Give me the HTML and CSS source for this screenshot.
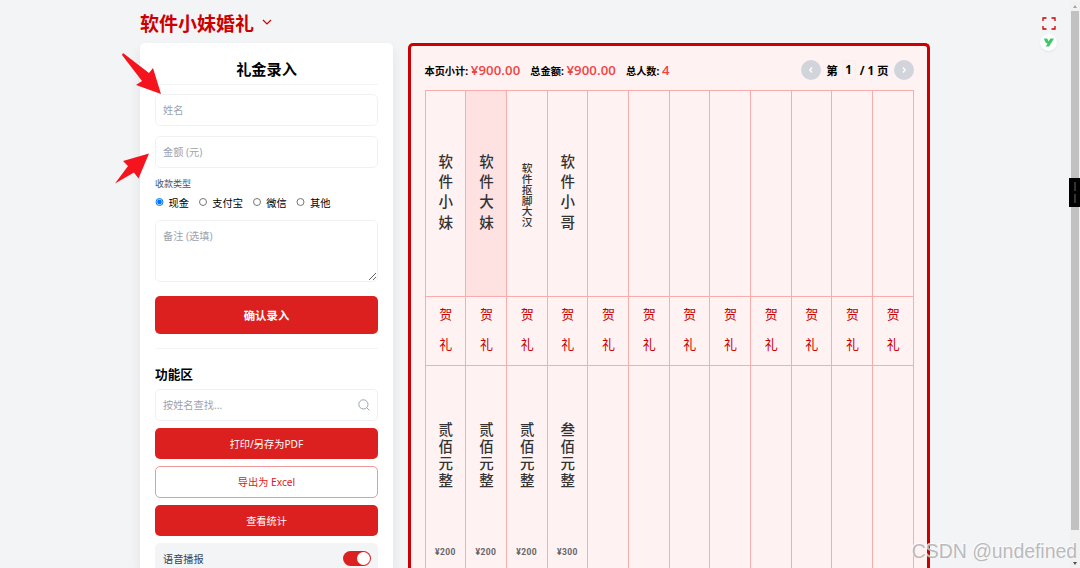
FILE: index.html
```html
<!DOCTYPE html>
<html lang="zh-CN">
<head>
  <meta charset="UTF-8" />
  <meta name="viewport" content="width=device-width, initial-scale=1.0"/>
  <title>软件小妹婚礼</title>
  <link rel="stylesheet" href="styles.css">
</head>
<body>
  <div class="page">
    <header class="page-header">
      <h1>软件小妹婚礼</h1>
      <svg class="chevron" viewBox="0 0 10 6"><path d="M1 1l4 4 4-4"/></svg>
    </header>

    <main class="columns">
      <section class="panel">
        <h2>礼金录入</h2>
        <form id="giftForm">
          <input class="field" type="text" placeholder="姓名">
          <input class="field" type="text" placeholder="金额 (元)">
          <div class="pay-label">收款类型</div>
          <div class="pay-types">
            <label><input type="radio" name="type" checked>现金</label>
            <label><input type="radio" name="type">支付宝</label>
            <label><input type="radio" name="type">微信</label>
            <label><input type="radio" name="type">其他</label>
          </div>
          <textarea class="field note" placeholder="备注 (选填)"></textarea>
          <button class="btn submit" type="submit">确认录入</button>
        </form>
        <div class="tools">
          <h3>功能区</h3>
          <div class="field search">
            <input type="text" placeholder="按姓名查找...">
            <svg viewBox="0 0 12 12"><circle cx="5.4" cy="5.4" r="4.6"/><path d="M8.7 8.7l2.6 2.6"/></svg>
          </div>
          <button class="btn">打印/另存为PDF</button>
          <button class="btn outline">导出为 Excel</button>
          <button class="btn">查看统计</button>
          <div class="voice"><span>语音播报</span><span class="switch"></span></div>
        </div>
      </section>

      <section class="book">
        <div class="book-header">
          <div class="totals">
            <span>本页小计: <b>¥900.00</b></span>
            <span>总金额: <b>¥900.00</b></span>
            <span>总人数: <b>4</b></span>
          </div>
          <div class="pager">
            <button class="round"><svg viewBox="0 0 6 8"><path d="M4 1.5L1.8 4 4 6.5"/></svg></button>
            <span>第</span><span class="page-no">1</span><span>/ 1 页</span>
            <button class="round"><svg viewBox="0 0 6 8"><path d="M2 1.5L4.2 4 2 6.5"/></svg></button>
          </div>
        </div>
        <div class="grid" id="grid"></div>
      </section>
    </main>
  </div>

  <div class="side-tools">
    <svg class="fullscreen" viewBox="0 0 14 13"><path d="M1 4V1h3.5M9.5 1H13v3M13 9v3H9.5M4.5 12H1V9"/></svg>
    <div class="plugin"><svg viewBox="0 0 10 9"><path d="M0 .5h3.2l1.3 2.8L6.5.5H10L5 8.5H1.8l1.8-2.8C1.6 5.4.6 3 0 .5z"/></svg></div>
  </div>

  <div class="scrollbar">
    <i class="arrow-up"></i>
    <div class="thumb"></div>
    <i class="arrow-down"></i>
  </div>
  <div class="handle"><i></i><i></i></div>

  <svg class="pointer pointer-name" viewBox="0 0 40 42"><path d="M1 0L27 20L31 15L39 41L14 32L20 28L0 2z"/></svg>
  <svg class="pointer pointer-amount" viewBox="0 0 34 31"><path d="M34 .5L23.5 25.5L19 19.5L0 30.5L13 13L8 8z"/></svg>
  <div class="watermark">CSDN @undefined</div>

  <script src="script.js"></script>
</body>
</html>
```

FILE: styles.css
```css
* {
  box-sizing: border-box;
}
body {
  margin: 0;
  height: 568px;
  overflow: hidden;
  position: relative;
  background: #f3f4f6;
  color: #000;
  font-family: "Noto Sans", "Noto Sans CJK SC", sans-serif;
  font-size: 10.2px;
}
h1, h2, h3 {
  margin: 0;
}
button, input, textarea {
  font-family: inherit;
  font-size: 10.2px;
}
/* side padding leaves room for the panel shadow */
.page {
  width: 822px;
  height: 568px;
  padding: 0 16px;
  margin-left: 124px;
  overflow: hidden;
}
.page-header {
  display: flex;
  align-items: center;
  gap: 8px;
  height: 43px;
  padding-top: 4px;
}
.page-header h1 {
  font-size: 19px;
  line-height: 28px;
  color: #c00;
}
.chevron {
  width: 10px;
  height: 6px;
  margin-top: -4px;
  fill: none;
  stroke: #c00;
  stroke-width: 1.2;
}
.columns {
  display: flex;
  gap: 15px;
  height: 525px;
}
.panel {
  width: 253px;
  padding: 15px 15px 0;
  overflow: hidden;
  background: #fff;
  border-radius: 5px 5px 0 0;
  box-shadow: 0 6px 12px rgba(0, 0, 0, 0.08);
}
.panel h2 {
  height: 27px;
  margin-bottom: 9px;
  border-bottom: 1px solid #f3f4f6;
  font-size: 15.2px;
  line-height: 23px;
  text-align: center;
}
.field {
  display: block;
  width: 100%;
  height: 32px;
  padding: 0 7px;
  margin-bottom: 9.5px;
  background: #fff;
  border: 1px solid #f0f1f3;
  border-radius: 5px;
  outline: none;
}
::placeholder {
  color: #9ca3af;
  opacity: 1;
}
.pay-label {
  height: 15px;
  margin-top: -1px;
  font-size: 9px;
  line-height: 15px;
  color: #4b5563;
}
.pay-types {
  display: flex;
  gap: 9.9px;
  height: 16px;
  margin: 3px 0 10px;
}
.pay-types label {
  display: flex;
  align-items: center;
  gap: 5px;
}
.pay-types input {
  width: 8.5px;
  height: 8.5px;
  margin: 0;
}
.note {
  height: 62px;
  padding-top: 7px;
  margin-bottom: 13.5px;
}
.btn {
  display: block;
  width: 100%;
  height: 30.5px;
  padding: 0;
  margin-bottom: 7.5px;
  color: #fff;
  background: #dc2020;
  border: none;
  border-radius: 5px;
}
.submit {
  height: 38px;
  margin-bottom: 14.5px;
  font-size: 11.4px;
  font-weight: bold;
}
.outline {
  height: 31.5px;
  color: #dc2020;
  background: #fff;
  border: 1px solid #e99;
}
.tools {
  border-top: 1px solid #f3f4f6;
}
.tools h3 {
  padding-top: 15.5px;
  margin-bottom: 6.5px;
  font-size: 12.7px;
  line-height: 18px;
}
.search {
  display: flex;
  align-items: center;
  margin-bottom: 7px;
}
.search input {
  flex: 1;
  padding: 0;
  border: none;
  outline: none;
}
.search svg {
  width: 12px;
  height: 12px;
  fill: none;
  stroke: #9ca3af;
}
.voice {
  display: flex;
  align-items: center;
  justify-content: space-between;
  height: 31px;
  padding: 0 7px 0 8px;
  color: #374151;
  background: #f3f4f6;
  border-radius: 5px;
}
.switch {
  width: 28px;
  height: 15px;
  padding: 1px;
  background: #dc2020;
  border-radius: 8px;
}
.switch::after {
  content: "";
  display: block;
  width: 13px;
  height: 13px;
  margin-left: 13px;
  background: #fff;
  border-radius: 50%;
}
.book {
  width: 522px;
  padding: 13px 13.5px 0;
  overflow: hidden;
  background: #fef2f2;
  border: 3px solid #c00;
  border-bottom: none;
  border-radius: 5px 5px 0 0;
}
.book-header {
  display: flex;
  align-items: center;
  justify-content: space-between;
  height: 22px;
  margin-bottom: 9px;
}
.totals {
  display: flex;
  gap: 10px;
  font-size: 10.2px;
  font-weight: bold;
}
.totals b {
  font-family: "Open Sans", sans-serif;
  font-size: 13.2px;
  font-weight: 650;
  letter-spacing: 0.1px;
  color: #ef4444;
}
.pager {
  display: flex;
  align-items: center;
  font-size: 11.5px;
  font-weight: bold;
}
.page-no {
  width: 12px;
  height: 18px;
  margin: 0 5px;
  line-height: 18px;
  text-align: center;
  border-radius: 2px;
  box-shadow: 0 0 0 1px #f8eef0;
}
.round {
  display: flex;
  align-items: center;
  justify-content: center;
  width: 20px;
  height: 20px;
  padding: 0;
  margin-right: 5px;
  background: #d1d5db;
  border: none;
  border-radius: 50%;
}
.round:last-child {
  margin: 0 0 0 5px;
}
.round svg {
  width: 6px;
  height: 8px;
  fill: none;
  stroke: #fff;
  stroke-width: 1.3;
}
.grid {
  display: grid;
  grid-template-columns: repeat(12, 1fr);
  border-top: 1px solid #fcabab;
  border-left: 1px solid #fcabab;
}
.entry > div {
  display: flex;
  align-items: center;
  justify-content: center;
  border-right: 1px solid #fcabab;
  border-bottom: 1px solid #fcabab;
}
.entry span {
  writing-mode: vertical-rl;
  white-space: nowrap;
  margin-left: 1px;
}
.entry .name {
  height: 206px;
  padding-top: 3px;
  font-family: KaiTi, "Noto Sans CJK SC", sans-serif;
  font-size: 14.5px;
  font-weight: 500;
  letter-spacing: 5.8px;
  color: #333;
}
.entry .long {
  font-size: 10.7px;
  letter-spacing: 0;
}
.entry .picked {
  background: #fee2e2;
}
.entry .gift {
  height: 69px;
  padding-top: 14px;
  font-family: KaiTi, "Noto Sans CJK SC", sans-serif;
  font-size: 13px;
  letter-spacing: 17px;
  color: #c00;
}
.entry .money {
  flex-direction: column;
  justify-content: flex-start;
  height: 205px;
  padding-top: 56px;
  font-family: KaiTi, "Noto Sans CJK SC", sans-serif;
  font-size: 14.5px;
  font-weight: 500;
  letter-spacing: 2.5px;
  color: #333;
}
.money small {
  margin-top: 56px;
  font-family: Roboto, sans-serif;
  font-size: 8.5px;
  font-weight: bold;
  line-height: 12px;
  letter-spacing: 0.4px;
  color: #666;
}
.side-tools {
  position: absolute;
  top: 17px;
  right: 23px;
  display: flex;
  flex-direction: column;
  align-items: center;
  gap: 4px;
}
.fullscreen {
  width: 14px;
  height: 13px;
  fill: none;
  stroke: #c00;
  stroke-width: 1.3;
}
.plugin {
  display: flex;
  align-items: center;
  justify-content: center;
  width: 17px;
  height: 17px;
  background: #fff;
  border-radius: 50%;
  box-shadow: 0 1px 2px rgba(0, 0, 0, 0.08);
}
.plugin svg {
  width: 10px;
  height: 9px;
  fill: #3cc864;
}
.scrollbar {
  position: absolute;
  top: 1px;
  right: 0;
  display: flex;
  flex-direction: column;
  align-items: center;
  width: 10px;
  height: 567px;
  padding: 4px 0 3px;
  background: #f1f1f1;
}
.thumb {
  width: 8px;
  height: 519px;
  margin: 3px 0 auto;
  background: #c1c1c1;
}
.arrow-up, .arrow-down {
  border: 2px solid transparent;
  border-top: none;
  border-bottom: 3px solid #a3a3a3;
}
.arrow-down {
  border-bottom: none;
  border-top: 3px solid #505050;
}
.handle {
  position: absolute;
  top: 178px;
  right: 0;
  display: flex;
  flex-direction: column;
  align-items: center;
  justify-content: center;
  gap: 3px;
  width: 11px;
  height: 29px;
  background: #000;
}
.handle i {
  width: 2px;
  height: 9px;
  background: #333;
}
.pointer {
  position: absolute;
  fill: #f5141e;
}
.pointer-name {
  top: 53px;
  left: 122px;
  width: 40px;
  height: 42px;
}
.pointer-amount {
  top: 153px;
  left: 115px;
  width: 34px;
  height: 31px;
}
.watermark {
  position: absolute;
  right: 3px;
  bottom: 6px;
  font-family: "Liberation Sans", sans-serif;
  font-size: 19.4px;
  line-height: 22px;
  color: rgba(175, 175, 175, 0.85);
  text-shadow: -1px -1px 0 rgba(255, 255, 255, 0.8);
}
```

FILE: script.js
```javascript
const gifts = [
  { name: "软件小妹", money: "贰佰元整", amount: 200 },
  { name: "软件大妹", money: "贰佰元整", amount: 200, picked: true },
  { name: "软件抠脚大汉", money: "贰佰元整", amount: 200 },
  { name: "软件小哥", money: "叁佰元整", amount: 300 },
];

// a page of the book always has 12 columns
const grid = document.getElementById("grid");
for (let i = 0; i < 12; i++) {
  const g = gifts[i];
  const cls = g ? (g.name.length > 4 ? " long" : "") + (g.picked ? " picked" : "") : "";
  const entry = document.createElement("div");
  entry.className = "entry";
  entry.innerHTML = `
    <div class="name${cls}"><span>${g ? g.name : ""}</span></div>
    <div class="gift"><span>贺礼</span></div>
    <div class="money">${g ? `<span>${g.money}</span><small>¥${g.amount}</small>` : ""}</div>`;
  grid.appendChild(entry);
}

document.getElementById("giftForm").addEventListener("submit", (e) => {
  e.preventDefault();
});
```
